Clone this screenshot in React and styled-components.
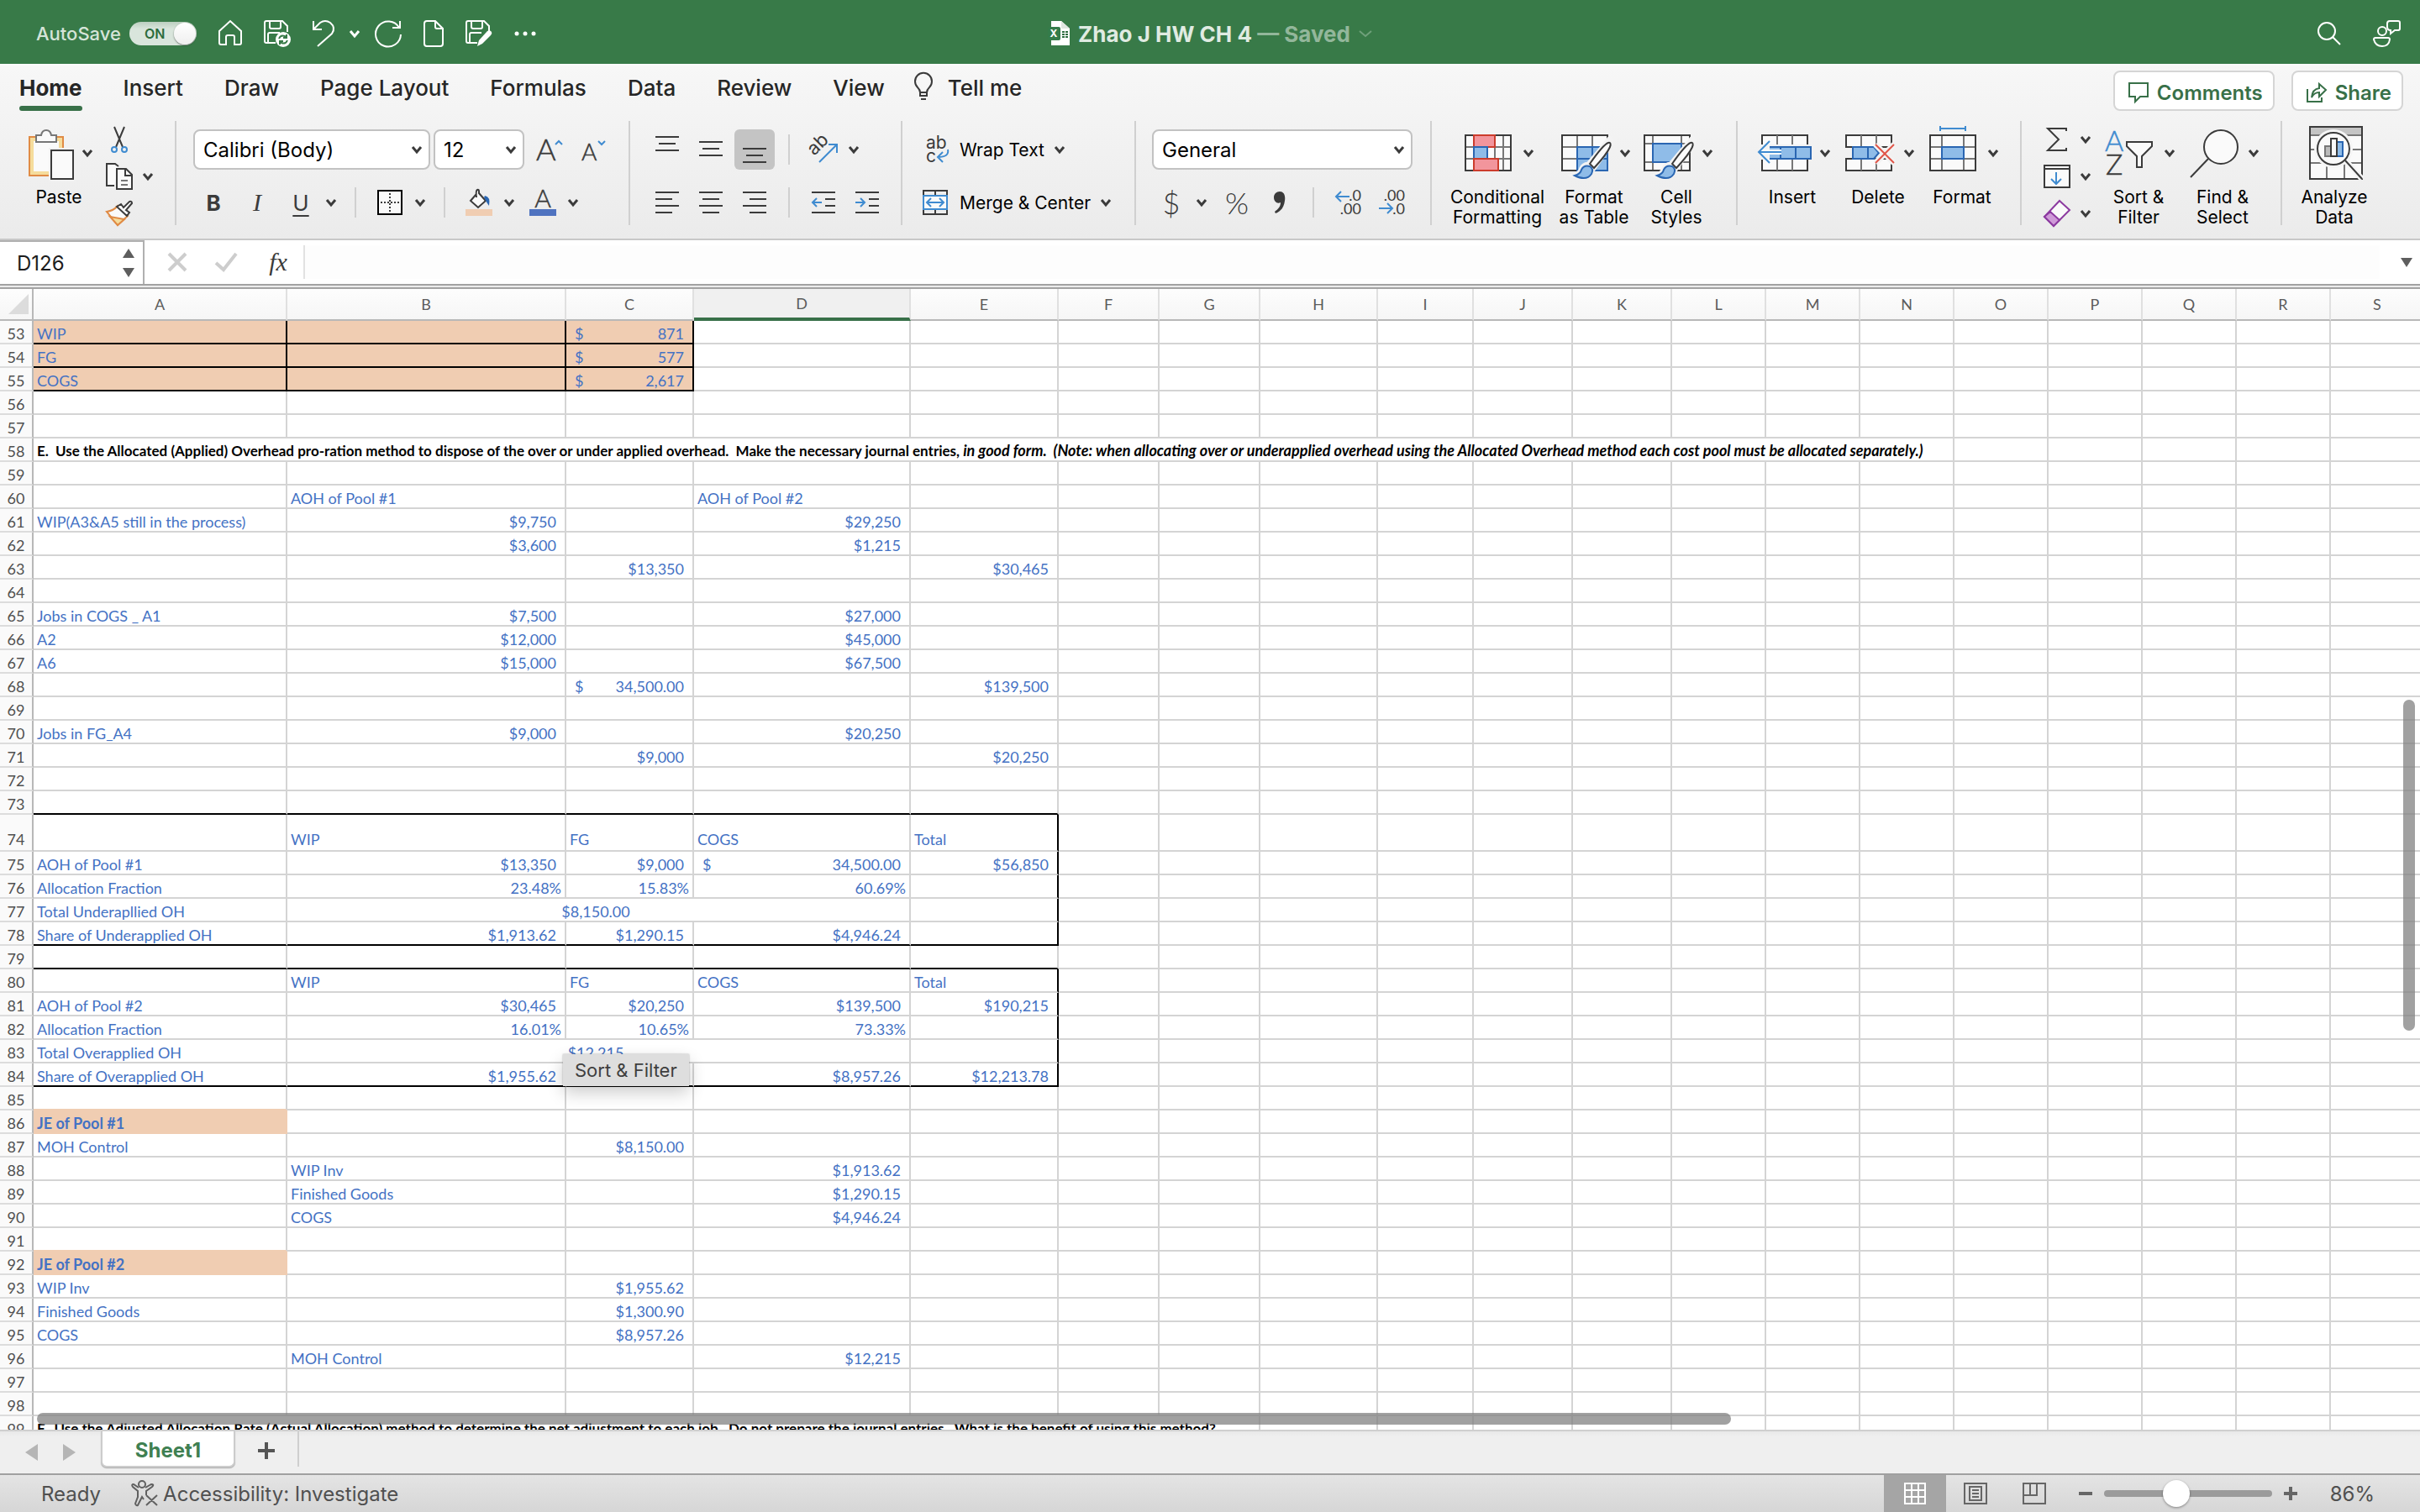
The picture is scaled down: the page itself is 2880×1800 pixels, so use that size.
import { Fragment } from 'react';
import styled, { createGlobalStyle, css } from 'styled-components';

const GlobalStyle = createGlobalStyle`
  * {
    box-sizing: border-box;
  }
  body {
    margin: 0;
    font-family: Inter, 'Liberation Sans', sans-serif;
    color: #1d1d1d;
  }
  button, input, select {
    font: inherit;
    color: inherit;
    margin: 0;
  }
  svg {
    display: block;
    flex: none;
    overflow: visible;
  }
`;

const ink = '#3b3b3b';
const blue = '#3f8bd0';
const navy = '#2a66b2';
const sky = '#8fbce8';

const Window = styled.div`
  height: 100vh;
  display: flex;
  flex-direction: column;
  overflow: hidden;
  background: #fff;
`;

const PlainButton = styled.button`
  display: flex;
  align-items: center;
  justify-content: center;
  padding: 0;
  border: 0;
  background: none;
`;

/* ---------- title bar ---------- */

const TitleBar = styled.header`
  flex: none;
  display: grid;
  grid-template-columns: 1fr auto 1fr;
  align-items: center;
  height: 76px;
  padding: 4px 22px 0;
  background: #387a48;
  color: #fff;
`;

const QuickBar = styled.div`
  display: flex;
  align-items: center;
  gap: ${(p) => p.gap || 26}px;
  padding-left: ${(p) => p.pad || 0}px;
  justify-content: ${(p) => (p.end ? 'flex-end' : 'flex-start')};
`;

const AutoSave = styled.label`
  display: flex;
  align-items: center;
  gap: 10px;
  font-size: 22px;
  font-weight: 500;
  color: #d5e4d8;
`;

const Toggle = styled.span`
  display: flex;
  align-items: center;
  justify-content: space-between;
  width: 80px;
  height: 28px;
  padding: 0 1px 0 18px;
  border-radius: 14px;
  background: linear-gradient(#bccfc0, #d9e5dc 30%);
  color: #2c6b3c;
  font-size: 16px;
  font-weight: 600;

  &::after {
    content: '';
    width: 26px;
    height: 26px;
    border-radius: 50%;
    background: linear-gradient(#fff, #efefef);
    box-shadow: 0 1px 2px rgba(0, 0, 0, 0.5);
  }
`;

const HiddenCheck = styled.input`
  appearance: none;
  width: 0;
  height: 0;
`;

const DocTitle = styled.h1`
  display: flex;
  align-items: center;
  gap: 10px;
  margin: 0;
  font-size: 26px;
  font-weight: 700;
  color: #e0ebe2;

  span {
    color: #93b79b;
  }
`;

/* ---------- ribbon ---------- */

const Ribbon = styled.section`
  flex: none;
  background: linear-gradient(#f7f7f7, #ebebeb);
  border-top: 2px solid #fafafa;
  border-bottom: 2px solid #c8c8c8;
`;

const TabRow = styled.nav`
  display: flex;
  align-items: flex-start;
  height: 66px;
  padding: 6px 20px 0 23px;
`;

const Tab = styled(PlainButton)`
  position: relative;
  height: 48px;
  margin-right: 49px;
  padding-bottom: 8px;
  font-size: 26px;
  font-weight: ${(p) => (p.$active ? 700 : 500)};
  color: #262626;

  &::after {
    content: '';
    display: ${(p) => (p.$active ? 'block' : 'none')};
    position: absolute;
    left: 0;
    right: 0;
    bottom: 0;
    height: 6px;
    border-radius: 3px;
    background: #387048;
  }
`;

const TellMe = styled(Tab)`
  gap: 18px;
  margin-left: -14px;
`;

const ActionButton = styled(PlainButton)`
  height: 48px;
  gap: 10px;
  padding: 4px 12px 0 16px;
  margin-left: ${(p) => (p.$push ? 'auto' : '20px')};
  border: 2px solid #d5d5d5;
  border-radius: 8px;
  background: #fff;
  color: #387048;
  font-size: 24px;
  font-weight: 600;
`;

const ToolRow = styled.div`
  display: flex;
  align-items: flex-start;
  height: 140px;
`;

const Group = styled.div`
  flex: none;
  display: flex;
  align-items: flex-start;
  width: ${(p) => p.w}px;
  height: 124px;
  padding-left: ${(p) => p.pad}px;
  gap: ${(p) => p.gap || 0}px;
  border-right: ${(p) => (p.last ? '0' : '2px solid #d0d0d0')};
`;

const Rows = styled.div`
  display: flex;
  flex-direction: column;
  gap: 15px;
  padding-top: 10px;
`;

const Row = styled.div`
  display: flex;
  align-items: center;
  height: 48px;
  gap: ${(p) => p.gap}px;
  padding-left: ${(p) => p.pad || 0}px;
`;

const MiniStack = styled.div`
  display: flex;
  flex-direction: column;
`;

const MiniRow = styled.div`
  display: flex;
  align-items: center;
  height: 44px;
  gap: 12px;
`;

const Split = styled.div`
  display: flex;
  align-items: center;
  gap: 14px;
`;

const Divider = styled.span`
  width: 2px;
  height: 36px;
  margin-left: ${(p) => p.before}px;
  margin-right: ${(p) => p.after}px;
  background: #d0d0d0;
`;

const ToolButton = styled(PlainButton)`
  width: 32px;
  height: 40px;
  color: ${ink};
  font-size: 26px;
  ${(p) => p.$bold && 'font-weight: 700;'}
  ${(p) => p.$italic && "font-family: 'Liberation Serif', serif; font-style: italic; font-size: 30px;"}
  ${(p) => p.$underline && 'text-decoration: underline; text-underline-offset: 5px; text-decoration-thickness: 2px;'}
`;

const AlignButton = styled(PlainButton)`
  width: 48px;
  height: 48px;
  border-radius: 6px;
  background: ${(p) => (p.$active ? '#c4c4c4' : 'none')};
`;

const Sign = styled(ToolButton)`
  font-family: Lato, sans-serif;
  font-weight: 300;
  font-size: 36px;
`;

const TextTool = styled(PlainButton)`
  gap: 14px;
  font-size: 21px;
  color: #000;
`;

const BigTool = styled.div`
  flex: none;
  display: flex;
  flex-direction: column;
  align-items: center;
  width: ${(p) => p.w}px;
  padding-top: 6px;
`;

const BigIcons = styled.div`
  display: flex;
  align-items: center;
  gap: 10px;
  height: 64px;
`;

const BigLabel = styled.span`
  margin-top: 9px;
  padding-right: 4px;
  font-size: 21px;
  line-height: 24px;
  text-align: center;
  white-space: pre;
  color: #000;
`;

const SelectBox = styled.span`
  display: grid;
  align-items: center;
  width: ${(p) => p.w}px;
  height: 48px;
  border: 2px solid #c2c2c2;
  border-radius: 8px;
  background: #fff;

  > * {
    grid-area: 1 / 1;
  }
  > svg {
    justify-self: end;
    margin-right: 8px;
    pointer-events: none;
  }
`;

const Select = styled.select`
  appearance: none;
  width: 100%;
  height: 44px;
  padding: 0 10px;
  border: 0;
  background: none;
  font-size: 24px;
  color: #000;
`;

/* ---------- formula bar ---------- */

const FormulaBar = styled.div`
  flex: none;
  display: flex;
  align-items: center;
  height: 52px;
  background: #fff;
`;

const NameBox = styled.div`
  display: flex;
  align-items: center;
  align-self: stretch;
  width: 172px;
  padding: 0 10px 0 20px;
  border-top: 2px solid #b0b0b0;
  border-right: 2px solid #b0b0b0;
`;

const NameInput = styled.input`
  flex: 1;
  min-width: 0;
  padding: 0;
  border: 0;
  background: none;
  font-size: 24px;
`;

const Spinner = styled.div`
  display: flex;
  flex-direction: column;
  gap: 12px;
`;

const FormulaTools = styled.div`
  display: flex;
  align-items: center;
  gap: 32px;
  padding: 0 14px 0 27px;
`;

const FormulaInput = styled.input`
  flex: 1;
  height: 40px;
  padding: 0 12px;
  border: 0;
  border-left: 2px solid #e2e2e2;
  background: #fdfdfd;
`;

const Expand = styled(PlainButton)`
  width: 48px;
  padding-left: 16px;
`;

const FormulaEdge = styled.div`
  flex: none;
  height: 6px;
  border-top: 2px solid #a3a3a3;
  border-bottom: 2px solid #a3a3a3;
  background: #ececec;
`;

/* ---------- grid ---------- */

const SheetArea = styled.main`
  position: relative;
  flex: 1;
  min-height: 0;
  overflow: hidden;
  border-bottom: 2px solid #cfcfcf;
`;

const Grid = styled.table`
  table-layout: fixed;
  width: 2886px;
  border-collapse: separate;
  border-spacing: 0;
  font-family: Lato, 'Open Sans', sans-serif;
  font-size: 18px;
  line-height: 22px;
`;

const ColHead = styled.th`
  height: 38px;
  padding: 0;
  border-right: 2px solid #e0e0e0;
  border-bottom: 2px solid #b8b8b8;
  background: linear-gradient(#fdfdfd, #f6f6f6);
  color: #5c5c5c;
  font-weight: 400;
  ${(p) =>
    p.$current &&
    css`
      border-bottom: 4px solid #387048;
      background: #f0f0f0;
    `}
`;

const Corner = styled(ColHead)`
  border-right-color: #b8b8b8;

  svg {
    margin-left: 10px;
  }
`;

const RowHead = styled.th`
  padding: 0 0 ${(p) => (p.$tall ? 2 : 0)}px;
  border-right: 2px solid #b8b8b8;
  border-bottom: 2px solid #dcdcdc;
  background: #fafafa;
  color: #505050;
  font-weight: 400;
  vertical-align: bottom;
`;

const Cell = styled.td`
  height: ${(p) => (p.$tall ? 44 : 28)}px;
  padding: 0 ${(p) => (p.$kind === 'percent' ? 4 : 10)}px ${(p) => (p.$tall ? 2 : 0)}px 4px;
  border-right: 2px solid ${(p) => p.$right || '#d4d4d4'};
  border-bottom: 2px solid ${(p) => p.$bottom || '#d4d4d4'};
  background: ${(p) => p.$fill || '#fff'};
  color: #4472c4;
  vertical-align: bottom;
  white-space: pre;
  font-weight: ${(p) => (p.$strong ? 700 : 400)};
  text-align: ${(p) => ({ label: 'left', center: 'center' })[p.$kind] || 'right'};
`;

const NoteCell = styled(Cell)`
  color: #000;
  font-size: 17px;
  font-weight: 700;
  padding-right: 0;

  i {
    font-size: 18px;
  }
`;

const Accounting = styled.span`
  display: flex;
  justify-content: space-between;
  padding-left: 6px;
`;

const ScrollThumb = styled.div`
  position: absolute;
  border-radius: 7px;
  background: rgba(128, 128, 128, 0.74);
  ${(p) =>
    p.$vertical
      ? 'right: 6px; top: 36%; width: 14px; height: 29%;'
      : 'left: 44px; bottom: 6px; width: 70%; height: 14px;'}
`;

const Tooltip = styled.div`
  position: absolute;
  left: 670px;
  top: 911px;
  padding: 0 14px;
  font-size: 22px;
  line-height: 38px;
  color: #3f3f3f;
  background: #dedede;
  box-shadow: 0 0 2px rgba(0, 0, 0, 0.3), 0 8px 20px rgba(0, 0, 0, 0.2);
`;

/* ---------- bottom bars ---------- */

const SheetTabs = styled.div`
  flex: none;
  display: flex;
  align-items: flex-start;
  height: 50px;
  padding-left: 30px;
  background: linear-gradient(#e8e8e8, #efefef 12%);
`;

const SheetNav = styled(PlainButton)`
  height: 50px;
  width: 15px;
  margin-right: 30px;
`;

const SheetTab = styled(PlainButton)`
  width: 160px;
  height: 43px;
  padding-top: 4px;
  border: 2px solid #cccccc;
  border-top: 0;
  border-radius: 0 0 7px 7px;
  background: #fff;
  box-shadow: 0 1px 1px #aaa;
  color: #3f8052;
  font-size: 24px;
  font-weight: 700;
`;

const AddSheet = styled(PlainButton)`
  width: 76px;
  height: 42px;
  padding-top: 4px;
  border-right: 2px solid #cfcfcf;
`;

const StatusBar = styled.footer`
  flex: none;
  display: flex;
  align-items: center;
  height: 46px;
  padding: 0 54px 0 49px;
  border-top: 2px solid #a0a0a0;
  background: linear-gradient(#e4e4e4, #d6d6d6);
  font-size: 24px;
  color: #505050;
`;

const Check = styled(PlainButton)`
  gap: 6px;
  margin: 0 auto 0 36px;
`;

const ViewButtons = styled.div`
  display: flex;
  margin-right: 18px;
`;

const ViewButton = styled(PlainButton)`
  width: ${(p) => (p.$active ? 74 : 70)}px;
  height: 44px;
  background: ${(p) => (p.$active ? '#a5a5a5' : 'none')};
`;

const ZoomSlider = styled.input`
  appearance: none;
  width: 200px;
  height: 8px;
  margin: 0 14px;
  border-radius: 4px;
  background: #9b9b9b;

  &::-webkit-slider-thumb {
    appearance: none;
    width: 32px;
    height: 32px;
    border-radius: 50%;
    background: #fff;
    box-shadow: 0 1px 3px rgba(0, 0, 0, 0.4);
  }
`;

const ZoomValue = styled.output`
  margin-left: 39px;
`;

/* ---------- icons ---------- */

const Icon = ({ w = 32, h = 32, stroke = ink, sw = 2, children }) => (
  <svg
    width={w}
    height={h}
    viewBox={`0 0 ${w} ${h}`}
    fill="none"
    stroke={stroke}
    strokeWidth={sw}
    aria-hidden="true"
  >
    {children}
  </svg>
);

const Chevron = ({ color = ink, w = 12, sw = 3 }) => (
  <Icon w={w} h={10} stroke={color} sw={sw}>
    <path d={`M1 2 L${w / 2} 8 L${w - 1} 2`} />
  </Icon>
);

const Triangle = ({ d, w = 14, h = 11, color = '#5e5e5e' }) => (
  <Icon w={w} h={h} stroke="none">
    <path d={d} fill={color} />
  </Icon>
);

const HomeIcon = () => (
  <Icon w={28} h={32} stroke="#fff">
    <path d="M1 13 L14 1 L27 13 V27 Q27 29 25 29 H19 V20 Q19 18 17 18 H11 Q9 18 9 20 V29 H3 Q1 29 1 27 Z" />
  </Icon>
);

const SaveIcon = ({ pencil }) => (
  <Icon stroke="#fff">
    <path d="M14 27 H3 Q1 27 1 25 V3 Q1 1 3 1 H22 L28 7 V14 M7 1 V8 Q7 10 9 10 H18 Q20 10 20 8 V1 M5 27 V17 Q5 15 7 15 H19" />
    {pencil ? (
      <path d="M14 31 L16 24 L26 13 Q29 11 31 14 Q32 16 30 18 L20 28 Z" fill="#fff" stroke="none" />
    ) : (
      <g>
        <circle cx="23" cy="23" r="9" fill="#fff" stroke="none" />
        <path d="M18 22 Q20 17 25 19 L27 21 M27 17 V21 H23 M28 24 Q26 29 21 27 L19 25 M19 29 V25 H23" stroke="#387a48" />
      </g>
    )}
  </Icon>
);

const UndoIcon = () => (
  <Icon w={26} stroke="#fff">
    <path d="M1 1 V11 H11 M1 11 L9 3 Q15 -1 21 3 Q28 9 23 16 L6 31" />
  </Icon>
);

const RedoIcon = () => (
  <Icon stroke="#fff">
    <path d="M30 1 V9 H21 M29 9 A15 15 0 1 0 31 17" />
  </Icon>
);

const FileIcon = () => (
  <Icon w={24} stroke="#fff">
    <path d="M14 1 H4 Q1 1 1 4 V28 Q1 31 4 31 H20 Q23 31 23 28 V10 Z M14 1 V8 Q14 10 16 10 H23" />
  </Icon>
);

const DotsIcon = () => (
  <Icon w={26} h={6} stroke="none">
    <g fill="#fff">
      <circle cx="3" cy="3" r="2.5" />
      <circle cx="13" cy="3" r="2.5" />
      <circle cx="23" cy="3" r="2.5" />
    </g>
  </Icon>
);

const ExcelIcon = () => (
  <Icon w={26} h={30} stroke="none">
    <path d="M4 0 H16 L26 9 V29 H4 Z" fill="#fff" />
    <path d="M16 0 V9 H26 Z" fill="#dfe6e0" />
    <path d="M17 12h3v2h-3z M21 12h3v2h-3z M17 15h3v2h-3z M21 15h3v2h-3z M17 18h3v2h-3z M21 18h3v2h-3z" fill="#2f6d40" />
    <rect y="7" width="15" height="16" rx="2" fill="#347c4a" />
    <text x="7" y="19" fontSize="12" fontWeight="700" textAnchor="middle" fill="#fff">X</text>
  </Icon>
);

const SearchIcon = () => (
  <Icon w={28} h={30} stroke="#fff">
    <circle cx="11" cy="12" r="10" />
    <path d="M18 19 L27 28" />
  </Icon>
);

const PresenceIcon = () => (
  <Icon w={34} stroke="#fff">
    <circle cx="11" cy="13" r="5" />
    <path d="M3 21 H18 Q20 21 20 23 Q19 31 11 31 T1 23 Q1 21 3 21 Z M20 1 H30 Q32 1 32 3 V10 Q32 12 30 12 H26 L21 16 V12 Q17 12 17 8 V4 Q17 1 20 1 Z" />
  </Icon>
);

const BulbIcon = () => (
  <Icon w={22} h={30}>
    <path d="M7 21 Q7 18 4 15 A10 10 0 1 1 18 15 Q15 18 15 21 Z M7 21 V25 H15 V21 M8 29 H14" />
  </Icon>
);

const CommentIcon = () => (
  <Icon w={24} h={26} stroke="#387048">
    <path d="M1 2 H23 V18 H14 L8 24 V18 H1 Z" />
  </Icon>
);

const ShareIcon = () => (
  <Icon w={24} h={26} stroke="#387048">
    <path d="M1 9 V24 H18 V19 M6 19 Q7 9 15 8 V3 L23 10 L15 18 V13 Q9 13 6 19 Z" />
  </Icon>
);

const PasteIcon = () => (
  <Icon w={54} h={64}>
    <rect x="1" y="13" width="40" height="46" fill="#f5dc9c" stroke="#e08b45" />
    <rect x="6" y="18" width="30" height="36" fill="#fafafa" stroke="none" />
    <path d="M9 19 V11 H15 Q16 5 21 5 T27 11 H33 V19 Z" fill="#fafafa" stroke="#777" />
    <rect x="24" y="26" width="32" height="40" fill="#f1f1f1" stroke="none" />
    <rect x="27" y="29" width="26" height="34" fill="#fafafa" />
  </Icon>
);

const CutIcon = () => (
  <Icon>
    <path d="M10 1 L20 25 M22 1 L12 25" />
    <g stroke={blue}>
      <circle cx="10" cy="28" r="3" />
      <circle cx="22" cy="28" r="3" />
    </g>
  </Icon>
);

const CopyIcon = () => (
  <Icon>
    <path d="M10 27 H1 V1 H11 L15 4" fill="#fafafa" />
    <path d="M13 7 H24 L31 14 V31 H13 Z" fill="#fafafa" />
    <path d="M23 7 V15 H31" />
    <path d="M18 21 H26 M18 26 H26" stroke="#777" />
  </Icon>
);

const PainterIcon = () => (
  <Icon>
    <path d="M1 14 Q9 13 14 7 L26 19 Q20 24 14 30 Z" fill="#fafafa" stroke="#e08b45" />
    <path d="M5 20 L22 23 L14 30 Z" fill="#f5dc9c" stroke="#e08b45" />
    <path d="M13 8 L18 5 L21 9 L28 2 Q31 1 31 4 L24 12 L28 15 L25 19 Z" fill="#fafafa" />
  </Icon>
);

const LetterA = ({ size, up }) => (
  <Icon w={32} h={36}>
    <text x="0" y="31" fontFamily="Lato, sans-serif" fontWeight="300" fontSize={size} fill={ink} stroke={ink} strokeWidth="0.5">
      A
    </text>
    <path d={up ? 'M23 12 L27 8 L31 12' : 'M20 8 L24 12 L28 8'} stroke={blue} />
  </Icon>
);

const BorderIcon = () => (
  <Icon>
    <rect x="2" y="2" width="28" height="28" fill="#fafafa" stroke="#000" />
    <path d="M16 5 V27 M5 16 H27" strokeDasharray="2 2" />
  </Icon>
);

const FillIcon = () => (
  <Icon>
    <path d="M13 6 L6 14 L15 22 L24 14 L16 5 V3 Q16 0 14 1 Q12 2 13 10" fill="#fafafa" />
    <path d="M23 8 Q30 9 28 20 Q25 16 22 10 Z" fill={navy} stroke="none" />
    <rect y="24" width="32" height="8" fill="#f0cdb2" stroke="none" />
  </Icon>
);

const FontColorIcon = () => (
  <Icon>
    <text x="16" y="22" textAnchor="middle" fontFamily="Lato, sans-serif" fontWeight="300" fontSize="30" fill={ink} stroke={ink} strokeWidth="0.5">
      A
    </text>
    <rect y="24" width="32" height="8" fill="#4f73c0" stroke="none" />
  </Icon>
);

const LinesIcon = ({ lines }) => (
  <Icon w={28} h={40}>
    {lines.map(([x, y, w]) => (
      <path key={`${x}-${y}`} d={`M${x} ${y} h${w}`} />
    ))}
  </Icon>
);

const IndentIcon = ({ out }) => (
  <Icon w={28} h={40}>
    <path d="M0 8 H28 M16 16 H28 M16 24 H28 M0 32 H28" />
    <path d={out ? 'M1 20 H12 M6 15 L1 20 L6 25' : 'M0 20 H11 M6 15 L11 20 L6 25'} stroke={blue} />
  </Icon>
);

const OrientIcon = () => (
  <Icon>
    <text x="5" y="24" transform="rotate(-45 5 24)" fontSize="22" fill={ink} stroke="none">ab</text>
    <path d="M11 31 L31 11 M22 10 H32 V20" stroke={blue} />
  </Icon>
);

const WrapIcon = () => (
  <Icon>
    <text x="6" y="15" fontSize="21" fill={ink} stroke="none">ab</text>
    <text x="6" y="31" fontSize="21" fill={ink} stroke="none">c</text>
    <path d="M32 16 Q34 25 20 25 M26 19 L20 25 L26 31" stroke={blue} />
  </Icon>
);

const MergeIcon = () => (
  <Icon>
    <path d="M3 2 H31 V30 H3 Z M17 2 V8 M17 24 V30" />
    <rect x="3" y="8" width="28" height="16" fill="#fafafa" stroke={blue} />
    <path d="M8 16 H26 M12 11 L7 16 L12 21 M22 11 L27 16 L22 21" stroke={blue} />
  </Icon>
);

const DecimalIcon = ({ more }) => (
  <Icon>
    <g fontFamily="Lato, sans-serif" fontSize="18" fill={ink} stroke="none" textAnchor="end">
      <text x="32" y="14">{more ? '.0' : '.00'}</text>
      <text x="32" y="30">{more ? '.00' : '.0'}</text>
    </g>
    <path d={more ? 'M2 9 H18 M8 3 L2 9 L8 15' : 'M1 23 H17 M11 17 L17 23 L11 29'} stroke={blue} />
  </Icon>
);

const Paintbrush = () => (
  <g>
    <path d="M57 15 Q62 13 59 22 L38 52 Q30 66 14 59 Q22 57 24 50 Q26 46 32 45 Z" fill="#f3f3f3" stroke="#f3f3f3" strokeWidth="5" />
    <path d="M34 45 Q50 22 56 20 Q60 19 58 25 Q54 34 39 50 Z" fill="#fafafa" />
    <path d="M16 59 Q23 57 24 52 Q27 46 34 48 Q39 51 36 57 Q30 66 16 59 Z" fill={sky} stroke={navy} />
  </g>
);

const ConditionalIcon = () => (
  <Icon w={60} h={64}>
    <rect x="1" y="11" width="54" height="42" fill="#fafafa" />
    <path d="M1 25 H55 M1 39 H55 M11 11 V53 M36 11 V53 M46 11 V53" stroke="#777" />
    <rect x="1" y="11" width="54" height="42" />
    <rect x="11" y="11" width="25" height="14" fill="#f2959c" stroke="#cc3c2c" />
    <rect x="11" y="25" width="16" height="14" fill={sky} stroke={navy} />
    <rect x="11" y="39" width="29" height="14" fill="#f2959c" stroke="#cc3c2c" />
  </Icon>
);

const FormatTableIcon = () => (
  <Icon w={60} h={64}>
    <rect x="1" y="11" width="54" height="42" fill="#fafafa" />
    <path d="M1 25 H55 M1 39 H55 M19 11 V53 M37 11 V53" stroke="#777" />
    <rect x="1" y="11" width="54" height="42" />
    <path d="M19 25 H55 V53 H19 Z M37 25 V53 M19 39 H55" fill={sky} stroke={navy} />
    <Paintbrush />
  </Icon>
);

const CellStylesIcon = () => (
  <Icon w={60} h={64}>
    <rect x="1" y="11" width="54" height="42" fill="#fafafa" />
    <path d="M1 21 H55 M1 43 H55 M11 11 V53 M45 11 V53" stroke="#777" />
    <rect x="1" y="11" width="54" height="42" />
    <rect x="11" y="21" width="34" height="22" fill={sky} stroke={navy} />
    <Paintbrush />
  </Icon>
);

const InsertIcon = () => (
  <Icon w={64} h={64}>
    <path d="M5 11 H59 V53 H5 Z" fill="#fafafa" />
    <path d="M23 11 V53 M41 11 V53" stroke="#777" />
    <rect x="2" y="22" width="60" height="18" fill="#f3f3f3" stroke="none" />
    <path d="M14 25 H63 V39 H14 M27 25 V39 M45 25 V39" fill={sky} stroke={navy} />
    <path d="M28 31 H2" stroke="#fafafa" strokeWidth="6" />
    <path d="M28 31 H1 M14 18 L1 31 L14 44" stroke={blue} />
  </Icon>
);

const DeleteIcon = () => (
  <Icon w={60} h={64}>
    <path d="M1 25 V11 H55 V25 Z M1 39 V53 H55 V39 Z" fill="#fafafa" />
    <path d="M19 11 V25 M37 11 V25 M19 39 V53 M37 39 V53" stroke="#777" />
    <path d="M9 25 H34 L40 32 L34 39 H9 Z M27 25 V39" fill={sky} stroke={navy} />
    <path d="M36 22 L58 44 M58 22 L36 44" stroke="#f3f3f3" strokeWidth="7" />
    <path d="M36 22 L58 44 M58 22 L36 44" stroke="#e05548" />
  </Icon>
);

const FormatIcon = () => (
  <Icon w={60} h={64}>
    <path d="M13 3 H43 M13 0 V6 M43 0 V6" stroke={blue} />
    <rect x="1" y="11" width="54" height="42" fill="#fafafa" />
    <path d="M1 25 H55 M1 39 H55 M15 11 V53 M41 11 V53" stroke="#777" />
    <rect x="1" y="11" width="54" height="42" />
    <rect x="15" y="25" width="26" height="14" fill={sky} stroke={navy} />
  </Icon>
);

const SumIcon = () => (
  <Icon>
    <path d="M27 6 V3 H5 L18 16 L5 29 H27 V26" />
  </Icon>
);

const FillDownIcon = () => (
  <Icon>
    <path d="M1 3 H31 V29 H1 Z M1 7 H31" fill="#fafafa" />
    <path d="M15 11 V25 M9 19 L15 25 L21 19" stroke={blue} />
  </Icon>
);

const EraserIcon = () => (
  <Icon stroke="#8c3aa0">
    <path d="M19 1 L31 12 L12 31 L1 20 Z" fill="#fafafa" />
    <path d="M8 14 L1 20 L12 31 L19 24 Z" fill="#cf9ad8" />
  </Icon>
);

const SortIcon = () => (
  <Icon w={60} h={64}>
    <g fontFamily="Lato, sans-serif" fontWeight="300" fontSize="34" strokeWidth="0.5">
      <text x="-1" y="30" fill={blue} stroke={blue}>A</text>
      <text x="0" y="58" fill={ink} stroke={ink}>Z</text>
    </g>
    <path d="M25 19 H55 V24 L43 36 V49 H37 V36 L25 24 Z" fill="#fafafa" />
  </Icon>
);

const FindIcon = () => (
  <Icon w={60} h={64}>
    <circle cx="37" cy="25" r="20" fill="#fafafa" />
    <path d="M22 39 L1 61" />
  </Icon>
);

const AnalyzeIcon = () => (
  <Icon w={64} h={64}>
    <rect x="1" y="1" width="62" height="62" fill="#fafafa" />
    <path d="M2 2 H62 V10 H2 Z" fill="#c4c4c4" stroke="none" />
    <path d="M1 11 H63 M1 28 H63 M1 44 H63 M21 44 V63 M42 44 V63" stroke="#777" />
    <rect x="1" y="1" width="62" height="62" />
    <circle cx="29" cy="27" r="23" fill="#f5f5f5" stroke="none" />
    <path d="M44 42 L63 63" stroke="#f5f5f5" strokeWidth="7" />
    <circle cx="29" cy="27" r="19" fill="#fafafa" />
    <path d="M43 41 L63 63" />
    <rect x="19" y="24" width="8" height="12" fill="#bbb" stroke="#777" />
    <rect x="33" y="19" width="7" height="17" fill={sky} stroke={navy} />
    <rect x="26" y="15" width="7" height="21" fill="#fafafa" />
  </Icon>
);

const AccessIcon = () => (
  <Icon stroke="#606060">
    <circle cx="13" cy="5" r="4" />
    <path d="M9 9 L3 5 Q0 5 2 8 L8 13 V20 L5 28 Q6 31 8 30 L13 20 L15 23 M17 9 L24 5 Q28 5 25 8 L18 13 V18 M18 18 L31 30 M31 18 L18 30" />
  </Icon>
);

const GridViewIcon = () => (
  <Icon w={26} h={26} stroke="#fff">
    <rect x="1" y="1" width="24" height="24" />
    <path d="M9 1 V25 M17 1 V25 M1 9 H25 M1 17 H25" />
  </Icon>
);

const PageViewIcon = () => (
  <Icon w={28} h={26} stroke="#666">
    <path d="M1 1 H27 V25 H1 Z M7 5 H21 V21 H7 Z M10 9 H18 M10 13 H18 M10 17 H18" />
  </Icon>
);

const BreakViewIcon = () => (
  <Icon w={28} h={26} stroke="#666">
    <path d="M1 1 H27 V25 H1 Z M1 15 H17 V1 M9 1 V15" />
  </Icon>
);

/* ---------- data ---------- */

const peach = '#f0cdb2';

const columns = [
  ['A', 302], ['B', 332], ['C', 152], ['D', 258], ['E', 176], ['F', 120], ['G', 120],
  ['H', 140], ['I', 114], ['J', 118], ['K', 118], ['L', 112], ['M', 112], ['N', 112],
  ['O', 112], ['P', 112], ['Q', 112], ['R', 112], ['S', 112],
];

const values = {
  53: { A: 'WIP', C: '$ 871' },
  54: { A: 'FG', C: '$ 577' },
  55: { A: 'COGS', C: '$ 2,617' },
  60: { B: 'AOH of Pool #1', D: 'AOH of Pool #2' },
  61: { A: 'WIP(A3&A5 still in the process)', B: '$9,750', D: '$29,250' },
  62: { B: '$3,600', D: '$1,215' },
  63: { C: '$13,350', E: '$30,465' },
  65: { A: 'Jobs in COGS _ A1', B: '$7,500', D: '$27,000' },
  66: { A: 'A2', B: '$12,000', D: '$45,000' },
  67: { A: 'A6', B: '$15,000', D: '$67,500' },
  68: { C: '$ 34,500.00', E: '$139,500' },
  70: { A: 'Jobs in FG_A4', B: '$9,000', D: '$20,250' },
  71: { C: '$9,000', E: '$20,250' },
  74: { B: 'WIP', C: 'FG', D: 'COGS', E: 'Total' },
  75: { A: 'AOH of Pool #1', B: '$13,350', C: '$9,000', D: '$ 34,500.00', E: '$56,850' },
  76: { A: 'Allocation Fraction', B: '23.48%', C: '15.83%', D: '60.69%' },
  77: { A: 'Total Underapllied OH', B: '$8,150.00' },
  78: { A: 'Share of Underapplied OH', B: '$1,913.62', C: '$1,290.15', D: '$4,946.24' },
  80: { B: 'WIP', C: 'FG', D: 'COGS', E: 'Total' },
  81: { A: 'AOH of Pool #2', B: '$30,465', C: '$20,250', D: '$139,500', E: '$190,215' },
  82: { A: 'Allocation Fraction', B: '16.01%', C: '10.65%', D: '73.33%' },
  83: { A: 'Total Overapplied OH', B: '$12,215' },
  84: { A: 'Share of Overapplied OH', B: '$1,955.62', D: '$8,957.26', E: '$12,213.78' },
  86: { A: 'JE of Pool #1' },
  87: { A: 'MOH Control', C: '$8,150.00' },
  88: { B: 'WIP Inv', D: '$1,913.62' },
  89: { B: 'Finished Goods', D: '$1,290.15' },
  90: { B: 'COGS', D: '$4,946.24' },
  92: { A: 'JE of Pool #2' },
  93: { A: 'WIP Inv', C: '$1,955.62' },
  94: { A: 'Finished Goods', C: '$1,300.90' },
  95: { A: 'COGS', C: '$8,957.26' },
  96: { B: 'MOH Control', D: '$12,215' },
};

const notes = {
  58: {
    span: 14,
    text: (
      <>
        {'E.  Use the Allocated (Applied) Overhead pro-ration method to dispose of the over or under applied overhead.  Make the necessary journal entries, '}
        <i>{'in good form.  (Note: when allocating over or underapplied overhead using the Allocated Overhead method each cost pool must be allocated separately.)'}</i>
      </>
    ),
  },
  99: {
    span: 7,
    text: 'F.  Use the Adjusted Allocation Rate (Actual Allocation) method to determine the net adjustment to each job.  Do not prepare the journal entries.  What is the benefit of using this method?',
  },
};

const merged = { 77: 3, 83: 3 };
const rowNumbers = Array.from({ length: 47 }, (_, i) => i + 53);

const kindOf = (text, row, col) => {
  if (merged[row] && col === 'B') return 'center';
  if (text.startsWith('$ ')) return 'accounting';
  if (text.endsWith('%')) return 'percent';
  return text.startsWith('$') ? 'number' : 'label';
};

const bordersOf = (row, col) => {
  const look = {};
  if (row <= 55 && 'ABC'.includes(col)) {
    Object.assign(look, { $fill: peach, $right: '#000', $bottom: '#000' });
  }
  if ([73, 78, 79, 84].includes(row) && 'ABCDE'.includes(col)) look.$bottom = '#000';
  if (col === 'E' && ((row > 73 && row < 79) || (row > 79 && row < 85))) look.$right = '#000';
  if (col === 'A' && [86, 92].includes(row)) {
    Object.assign(look, { $fill: peach, $right: peach, $bottom: peach, $strong: true });
  }
  if (col === 'A' && [85, 91].includes(row)) look.$bottom = peach;
  return look;
};

function SheetRow({ row }) {
  const note = notes[row];
  const tall = row === 74;
  const cells = [];
  let i = 0;
  if (note) {
    cells.push(
      <NoteCell key="note" colSpan={note.span} $kind="label">
        {note.text}
      </NoteCell>
    );
    i = note.span;
  }
  while (i < columns.length) {
    const col = columns[i][0];
    const text = values[row]?.[col] || '';
    const kind = kindOf(text, row, col);
    const span = kind === 'center' ? merged[row] : 1;
    cells.push(
      <Cell key={col} colSpan={span} $kind={kind} $tall={tall} {...bordersOf(row, col)}>
        {kind === 'accounting' ? (
          <Accounting>
            <span>$</span>
            <span>{text.slice(2)}</span>
          </Accounting>
        ) : (
          text
        )}
      </Cell>
    );
    i += span;
  }
  return (
    <tr>
      <RowHead scope="row" $tall={tall}>{row}</RowHead>
      {cells}
    </tr>
  );
}

function Big({ icon, label, w, menu = true }) {
  return (
    <BigTool w={w}>
      <BigIcons>
        <PlainButton aria-label={label.replace('\n', ' ')}>{icon}</PlainButton>
        {menu && (
          <PlainButton aria-label={`${label.replace('\n', ' ')} options`}>
            <Chevron />
          </PlainButton>
        )}
      </BigIcons>
      <BigLabel>{label}</BigLabel>
    </BigTool>
  );
}

function WithMenu({ label, icon, as: Button = ToolButton, ...rest }) {
  return (
    <Split>
      <Button aria-label={label} {...rest}>{icon}</Button>
      <PlainButton aria-label={`${label} options`}>
        <Chevron />
      </PlainButton>
    </Split>
  );
}

function Dropdown({ label, value, w }) {
  return (
    <SelectBox w={w}>
      <Select aria-label={label} defaultValue={value}>
        <option>{value}</option>
      </Select>
      <Chevron />
    </SelectBox>
  );
}

const tabs = ['Home', 'Insert', 'Draw', 'Page Layout', 'Formulas', 'Data', 'Review', 'View'];

const vertical = [
  ['Top align', [[0, 5, 28], [4, 13, 20], [0, 21, 28]]],
  ['Middle align', [[0, 11, 28], [4, 19, 20], [0, 27, 28]]],
  ['Bottom align', [[0, 19, 28], [4, 27, 20], [0, 35, 28]]],
];

const horizontal = [
  ['Align left', [[0, 8, 28], [0, 16, 20], [0, 24, 28], [0, 32, 20]]],
  ['Center', [[0, 8, 28], [4, 16, 20], [0, 24, 28], [4, 32, 20]]],
  ['Align right', [[0, 8, 28], [8, 16, 20], [0, 24, 28], [8, 32, 20]]],
];

function RibbonTools() {
  return (
    <ToolRow>
      <Group w={210} pad={34} gap={16}>
        <Big icon={<PasteIcon />} label="Paste" w={76} />
        <MiniStack>
          <MiniRow><PlainButton aria-label="Cut"><CutIcon /></PlainButton></MiniRow>
          <MiniRow>
            <PlainButton aria-label="Copy"><CopyIcon /></PlainButton>
            <Chevron />
          </MiniRow>
          <MiniRow><PlainButton aria-label="Format painter"><PainterIcon /></PlainButton></MiniRow>
        </MiniStack>
      </Group>

      <Group w={540} pad={20}>
        <Rows>
          <Row gap={4}>
            <Dropdown label="Font" value="Calibri (Body)" w={282} />
            <Dropdown label="Font size" value="12" w={108} />
            <Row gap={22} pad={10}>
              <ToolButton aria-label="Increase font size"><LetterA size={36} up /></ToolButton>
              <ToolButton aria-label="Decrease font size"><LetterA size={28} /></ToolButton>
            </Row>
          </Row>
          <Row gap={0} pad={8}>
            <Row gap={20}>
              <ToolButton $bold>B</ToolButton>
              <ToolButton $italic>I</ToolButton>
              <WithMenu label="Underline" icon="U" $underline />
            </Row>
            <Divider before={22} after={24} />
            <WithMenu label="Borders" icon={<BorderIcon />} />
            <Divider before={22} after={24} />
            <Row gap={18}>
              <WithMenu label="Fill color" icon={<FillIcon />} />
              <WithMenu label="Font color" icon={<FontColorIcon />} />
            </Row>
          </Row>
        </Rows>
      </Group>

      <Group w={324} pad={20}>
        <Rows>
          <Row gap={0}>
            <Row gap={4}>
              {vertical.map(([label, lines]) => (
                <AlignButton key={label} aria-label={label} $active={label === 'Bottom align'}>
                  <LinesIcon lines={lines} />
                </AlignButton>
              ))}
            </Row>
            <Divider before={16} after={24} />
            <WithMenu label="Orientation" icon={<OrientIcon />} />
          </Row>
          <Row gap={0}>
            <Row gap={4}>
              {horizontal.map(([label, lines]) => (
                <AlignButton key={label} aria-label={label}>
                  <LinesIcon lines={lines} />
                </AlignButton>
              ))}
            </Row>
            <Divider before={16} after={16} />
            <Row gap={4}>
              <AlignButton aria-label="Decrease indent"><IndentIcon out /></AlignButton>
              <AlignButton aria-label="Increase indent"><IndentIcon /></AlignButton>
            </Row>
          </Row>
        </Rows>
      </Group>

      <Group w={278} pad={22}>
        <Rows>
          <Row gap={12}>
            <TextTool><WrapIcon />Wrap Text</TextTool>
            <Chevron />
          </Row>
          <Row gap={12}>
            <TextTool><MergeIcon />Merge &amp; Center</TextTool>
            <Chevron />
          </Row>
        </Rows>
      </Group>

      <Group w={352} pad={19}>
        <Rows>
          <Row gap={0}>
            <Dropdown label="Number format" value="General" w={310} />
          </Row>
          <Row gap={0} pad={7}>
            <Row gap={20}>
              <WithMenu label="Currency" icon="$" as={Sign} />
              <Sign>%</Sign>
              <ToolButton aria-label="Comma style">
                <Icon w={12} h={26} stroke="none">
                  <path d="M5 0 C10 0 12 5 11 11 C10 19 6 24 0 26 L-1 24 C3 21 6 18 6 13 C2 15 -2 12 -2 7 C-2 3 1 0 5 0 Z" fill={ink} />
                </Icon>
              </ToolButton>
            </Row>
            <Divider before={22} after={24} />
            <Row gap={20}>
              <ToolButton aria-label="Increase decimal"><DecimalIcon more /></ToolButton>
              <ToolButton aria-label="Decrease decimal"><DecimalIcon /></ToolButton>
            </Row>
          </Row>
        </Rows>
      </Group>

      <Group w={364} pad={22} gap={16}>
        <Big icon={<ConditionalIcon />} label={'Conditional\nFormatting'} w={116} />
        <Big icon={<FormatTableIcon />} label={'Format\nas Table'} w={82} />
        <Big icon={<CellStylesIcon />} label={'Cell\nStyles'} w={82} />
      </Group>

      <Group w={338} pad={24} gap={18}>
        <Big icon={<InsertIcon />} label="Insert" w={86} />
        <Big icon={<DeleteIcon />} label="Delete" w={82} />
        <Big icon={<FormatIcon />} label="Format" w={82} />
      </Group>

      <Group w={310} pad={26} gap={18}>
        <MiniStack>
          {[['AutoSum', <SumIcon />], ['Fill', <FillDownIcon />], ['Clear', <EraserIcon />]].map(
            ([label, icon]) => (
              <MiniRow key={label}>
                <PlainButton aria-label={label}>{icon}</PlainButton>
                <Chevron />
              </MiniRow>
            )
          )}
        </MiniStack>
        <Big icon={<SortIcon />} label={'Sort &\nFilter'} w={82} />
        <Big icon={<FindIcon />} label={'Find &\nSelect'} w={82} />
      </Group>

      <Group w={130} pad={24} last>
        <Big icon={<AnalyzeIcon />} label={'Analyze\nData'} w={80} menu={false} />
      </Group>
    </ToolRow>
  );
}

export default function App() {
  return (
    <Window>
      <GlobalStyle />
      <TitleBar>
        <QuickBar pad={21}>
          <AutoSave>
            AutoSave
            <HiddenCheck type="checkbox" defaultChecked hidden />
            <Toggle>ON</Toggle>
          </AutoSave>
          <PlainButton aria-label="Home screen"><HomeIcon /></PlainButton>
          <PlainButton aria-label="Save"><SaveIcon /></PlainButton>
          <QuickBar gap={18}>
            <PlainButton aria-label="Undo"><UndoIcon /></PlainButton>
            <Chevron color="#fff" />
            <PlainButton aria-label="Redo"><RedoIcon /></PlainButton>
          </QuickBar>
          <PlainButton aria-label="New file"><FileIcon /></PlainButton>
          <PlainButton aria-label="Save as"><SaveIcon pencil /></PlainButton>
          <PlainButton aria-label="More"><DotsIcon /></PlainButton>
        </QuickBar>
        <DocTitle>
          <ExcelIcon />
          <div>
            Zhao J HW CH 4 <span>— Saved</span>
          </div>
          <Chevron color="#6fa07b" w={16} sw={2} />
        </DocTitle>
        <QuickBar gap={38} end>
          <PlainButton aria-label="Search"><SearchIcon /></PlainButton>
          <PlainButton aria-label="Presence"><PresenceIcon /></PlainButton>
        </QuickBar>
      </TitleBar>

      <Ribbon>
        <TabRow>
          {tabs.map((tab) => (
            <Tab key={tab} $active={tab === 'Home'}>{tab}</Tab>
          ))}
          <TellMe><BulbIcon />Tell me</TellMe>
          <ActionButton $push><CommentIcon />Comments</ActionButton>
          <ActionButton><ShareIcon />Share</ActionButton>
        </TabRow>
        <RibbonTools />
      </Ribbon>

      <FormulaBar>
        <NameBox>
          <NameInput aria-label="Name box" defaultValue="D126" />
          <Spinner>
            <Triangle d="M0 11 L7 0 L14 11 Z" />
            <Triangle d="M0 0 L7 11 L14 0 Z" />
          </Spinner>
        </NameBox>
        <FormulaTools>
          <PlainButton aria-label="Cancel">
            <Icon w={24} h={24} stroke="#cdcdcd" sw={4}><path d="M2 2 L22 22 M22 2 L2 22" /></Icon>
          </PlainButton>
          <PlainButton aria-label="Enter">
            <Icon w={28} h={24} stroke="#cdcdcd" sw={4}><path d="M2 13 L11 21 L26 2" /></Icon>
          </PlainButton>
          <ToolButton $italic aria-label="Insert function">fx</ToolButton>
        </FormulaTools>
        <FormulaInput aria-label="Formula" />
        <Expand aria-label="Expand formula bar">
          <Triangle d="M0 0 L7 11 L14 0 Z" />
        </Expand>
      </FormulaBar>
      <FormulaEdge />

      <SheetArea>
        <Grid>
          <colgroup>
            <col width="40" />
            {columns.map(([name, width]) => (
              <col key={name} width={width} />
            ))}
          </colgroup>
          <thead>
            <tr>
              <Corner aria-label="Select all">
                <Triangle d="M24 0 V24 H0 Z" w={24} h={24} color="#dcdcdc" />
              </Corner>
              {columns.map(([name]) => (
                <ColHead key={name} scope="col" $current={name === 'D'}>{name}</ColHead>
              ))}
            </tr>
          </thead>
          <tbody>
            {rowNumbers.map((row) => (
              <Fragment key={row}>
                <SheetRow row={row} />
              </Fragment>
            ))}
          </tbody>
        </Grid>
        <ScrollThumb $vertical />
        <ScrollThumb />
        <Tooltip role="tooltip">Sort &amp; Filter</Tooltip>
      </SheetArea>

      <SheetTabs>
        <SheetNav aria-label="Previous sheet">
          <Triangle d="M15 0 V20 L0 10 Z" w={15} h={20} color="#b5b5b5" />
        </SheetNav>
        <SheetNav aria-label="Next sheet">
          <Triangle d="M0 0 V20 L15 10 Z" w={15} h={20} color="#b5b5b5" />
        </SheetNav>
        <SheetTab>Sheet1</SheetTab>
        <AddSheet aria-label="Add sheet">
          <Icon w={20} h={20} stroke="#555" sw={4}><path d="M10 0 V20 M0 10 H20" /></Icon>
        </AddSheet>
      </SheetTabs>

      <StatusBar>
        <span>Ready</span>
        <Check><AccessIcon />Accessibility: Investigate</Check>
        <ViewButtons>
          <ViewButton aria-label="Normal view" $active><GridViewIcon /></ViewButton>
          <ViewButton aria-label="Page layout view"><PageViewIcon /></ViewButton>
          <ViewButton aria-label="Page break view"><BreakViewIcon /></ViewButton>
        </ViewButtons>
        <PlainButton aria-label="Zoom out">
          <Icon w={16} h={16} stroke="#666" sw={4}><path d="M0 8 H16" /></Icon>
        </PlainButton>
        <ZoomSlider type="range" aria-label="Zoom" defaultValue={42} />
        <PlainButton aria-label="Zoom in">
          <Icon w={16} h={16} stroke="#666" sw={4}><path d="M0 8 H16 M8 0 V16" /></Icon>
        </PlainButton>
        <ZoomValue>86%</ZoomValue>
      </StatusBar>
    </Window>
  );
}
